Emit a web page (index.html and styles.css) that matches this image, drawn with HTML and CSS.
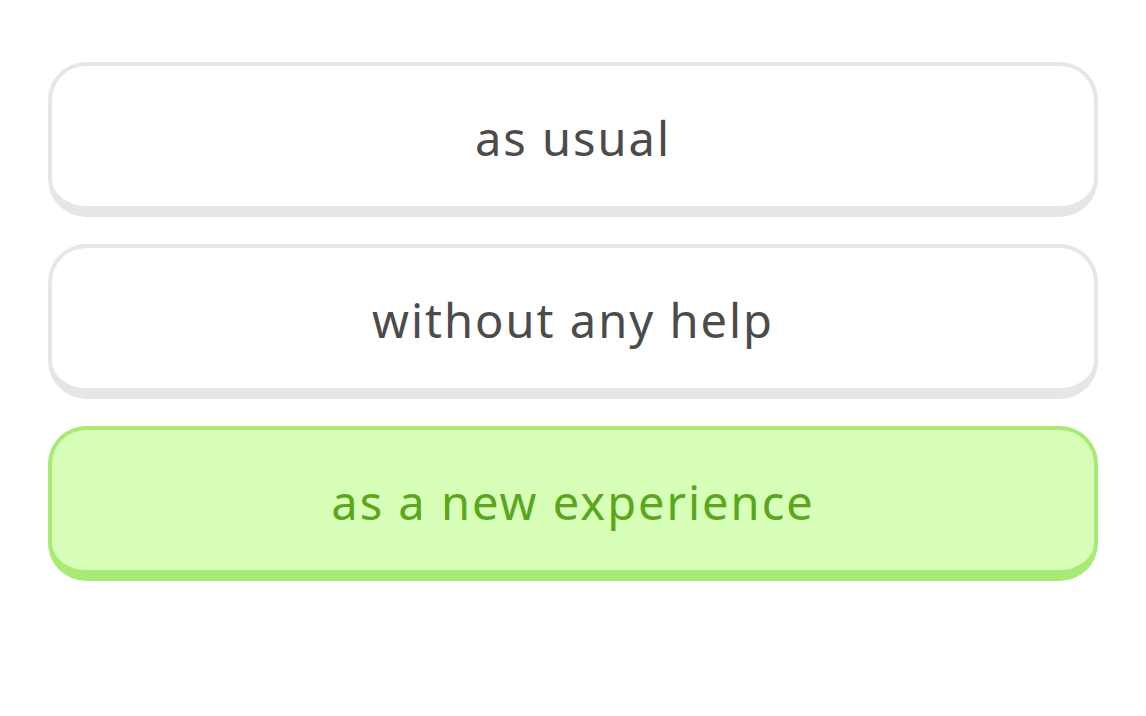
FILE: index.html
```html
<!DOCTYPE html>
<html>
<head>
<meta charset="utf-8">
<link rel="stylesheet" href="styles.css">
</head>
<body>
<div class="options">
  <div class="option">as usual</div>
  <div class="option">without any help</div>
  <div class="option selected">as a new experience</div>
</div>
</body>
</html>
```
FILE: styles.css
```css
html, body {
  margin: 0;
  padding: 0;
  background: #ffffff;
}
body {
  width: 1146px;
  height: 716px;
  overflow: hidden;
  font-family: "Noto Sans", "DejaVu Sans", sans-serif;
}
.options {
  display: flex;
  flex-direction: column;
  gap: 27px;
  padding: 62px 48px 0 48px;
}
.option {
  box-sizing: border-box;
  height: 155px;
  border: 4px solid #e6e6e6;
  border-bottom-width: 11px;
  border-radius: 38px;
  background: #ffffff;
  color: #4b4b4b;
  font-size: 47px;
  font-weight: 400;
  letter-spacing: 2px;
  display: flex;
  align-items: center;
  justify-content: center;
  padding-top: 4px;
}
.option.selected {
  background: #d7ffb8;
  border-color: #a8ea74;
  color: #5aa61c;
}
```
